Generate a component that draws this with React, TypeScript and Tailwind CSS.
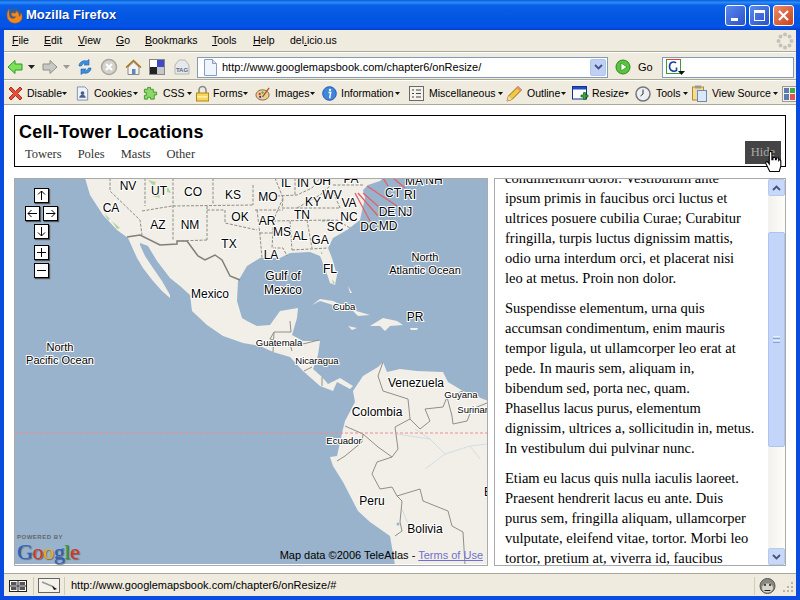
const menus = [
  { pre: '', u: 'F', post: 'ile', w: 'w-[32px]' },
  { pre: '', u: 'E', post: 'dit', w: 'w-[34px]' },
  { pre: '', u: 'V', post: 'iew', w: 'w-[38px]' },
  { pre: '', u: 'G', post: 'o', w: 'w-[29px]' },
  { pre: '', u: 'B', post: 'ookmarks', w: 'w-[67px]' },
  { pre: '', u: 'T', post: 'ools', w: 'w-[41px]' },
  { pre: '', u: 'H', post: 'elp', w: 'w-[37px]' },
  { pre: 'del', u: '.', post: 'icio.us', w: 'w-[60px]' },
];

const IconX = () => (
  <svg width="17" height="17" viewBox="0 0 17 17">
    <path d="M2 4l2-2 4.500 4.500L13 2l2 2-4.500 4.500L15 13l-2 2-4.500-4.500L4 15l-2-2 4.500-4.500z" fill="#e8503a" stroke="#b02a18" />
  </svg>
);
const IconCookie = () => (
  <svg width="15" height="17" viewBox="0 0 16 17">
    <path d="M2.500 1.500h8l3 3v11h-11z" fill="#eef2fa" stroke="#7d8fb0" />
    <circle cx="8" cy="8" r="2" fill="#4a5f85" />
    <path d="M4.500 13c0-2.500 2-3 3.500-3s3.500.5 3.500 3z" fill="#4a5f85" />
  </svg>
);
const IconCss = () => (
  <svg width="15" height="15" viewBox="0 0 16 16">
    <path d="M5 1.500h3v2h3v3h3.500v3H12v4.500H8v-2H5v2H1.500v-4h2v-3h-2v-3.500H5z" fill="#8fd66a" stroke="#3d9a2c" />
  </svg>
);
const IconLock = () => (
  <svg width="15" height="17" viewBox="0 0 15 17">
    <path d="M4 8V5a3.500 3.500 0 0 1 7 0v3" fill="none" stroke="#888" strokeWidth="1.500" />
    <rect x="1.500" y="8" width="12" height="8" fill="#f7d65a" stroke="#b08a1a" />
    <rect x="2.500" y="11" width="10" height="1.500" fill="#fff3b0" />
  </svg>
);
const IconPalette = () => (
  <svg width="16" height="16" viewBox="0 0 17 16">
    <ellipse cx="8" cy="9" rx="7" ry="5.500" fill="#e8cf9a" stroke="#8a6a30" />
    <circle cx="5" cy="8" r="1.200" fill="#d33" />
    <circle cx="8" cy="6.500" r="1.200" fill="#3a3" />
    <circle cx="5.500" cy="11" r="1.200" fill="#33c" />
    <path d="M8 11L15 1.500" stroke="#b0562a" strokeWidth="1.500" />
  </svg>
);
const IconInfo = () => (
  <svg width="15" height="15" viewBox="0 0 15 15">
    <circle cx="7.500" cy="7.500" r="6.800" fill="#3f86dd" stroke="#1f5bb0" />
    <circle cx="8" cy="4" r="1.200" fill="#fff" />
    <path d="M6.500 6.500h2.200l-1 5h1" fill="none" stroke="#fff" strokeWidth="1.400" />
  </svg>
);
const IconMisc = () => (
  <svg width="15" height="15" viewBox="0 0 15 15">
    <rect x="0.500" y="0.500" width="14" height="14" fill="#f4f2ea" stroke="#6a6a6a" />
    <path d="M3 4h2M7 4h5M3 7.500h2M7 7.500h5M3 11h2M7 11h5" stroke="#444" />
  </svg>
);
const IconPencil = () => (
  <svg width="17" height="17" viewBox="0 0 17 17">
    <path d="M1 16l1.500-5L12 1.500 15.500 5 6 14.500z" fill="#f5c842" stroke="#8a6a10" />
    <path d="M1 16l1.500-5L6 14.500z" fill="#f0dcb0" />
    <path d="M12 1.500L15.500 5l-1.500 1.500L10.500 3z" fill="#e88" />
  </svg>
);
const IconResize = () => (
  <svg width="17" height="15" viewBox="0 0 17 15">
    <rect x="0.500" y="0.500" width="14" height="12.500" fill="#fff" stroke="#10309a" />
    <rect x="1" y="1" width="13" height="2.500" fill="#2050c0" />
    <path d="M11.500 6.500h2v2.500H16v2h-2.500v2.500h-2V11H9V9h2.500z" fill="#39a935" stroke="#14601a" strokeWidth="0.700" />
  </svg>
);
const IconClock = () => (
  <svg width="16" height="16" viewBox="0 0 16 16">
    <circle cx="8" cy="8" r="7" fill="#eceff4" stroke="#777" strokeWidth="1.500" />
    <path d="M8 3.500V8l-2.500 2" fill="none" stroke="#333" />
  </svg>
);
const IconClipboard = () => (
  <svg width="15" height="17" viewBox="0 0 15 17">
    <rect x="0.500" y="2" width="11" height="13" fill="#f2dc9a" stroke="#b58a20" />
    <rect x="3" y="0.500" width="6" height="3" fill="#999" />
    <rect x="5.500" y="5.500" width="9" height="11" fill="#dce7f8" stroke="#6a88b8" />
  </svg>
);

const devItems = [
  { label: 'Disable', icon: <IconX />, w: 'w-[68px]', gap: 'gap-[3px]' },
  { label: 'Cookies', icon: <IconCookie />, w: 'w-[68px]', gap: 'gap-[4px]' },
  { label: 'CSS', icon: <IconCss />, w: 'w-[52px]', gap: 'gap-[5px]' },
  { label: 'Forms', icon: <IconLock />, w: 'w-[60px]', gap: 'gap-[3px]' },
  { label: 'Images', icon: <IconPalette />, w: 'w-[67px]', gap: 'gap-[4px]' },
  { label: 'Information', icon: <IconInfo />, w: 'w-[87px]', gap: 'gap-[4px]' },
  { label: 'Miscellaneous', icon: <IconMisc />, w: 'w-[97px]', gap: 'gap-[5px]' },
  { label: 'Outline', icon: <IconPencil />, w: 'w-[66px]', gap: 'gap-[4px]' },
  { label: 'Resize', icon: <IconResize />, w: 'w-[63px]', gap: 'gap-[3px]' },
  { label: 'Tools', icon: <IconClock />, w: 'w-[57px]', gap: 'gap-[5px]' },
  { label: 'View Source', icon: <IconClipboard />, w: 'w-[90px]', gap: 'gap-[5px]' },
];

const bigLabels: [string, number, number][] = [
  ['NV', 128, 191], ['UT', 159, 196], ['CO', 193, 197], ['KS', 233, 200], ['MO', 268, 202],
  ['CA', 111, 213], ['OK', 240, 222], ['AZ', 158, 230], ['NM', 190, 230], ['AR', 267, 226],
  ['TX', 229, 249], ['IL', 286, 188], ['IN', 303, 188], ['OH', 322, 186], ['PA', 351, 184],
  ['MA', 414, 186], ['NH', 434, 185], ['CT', 393, 198], ['RI', 410, 200], ['WV', 332, 200],
  ['KY', 313, 207], ['VA', 349, 208], ['TN', 302, 220], ['NC', 349, 222], ['DE', 387, 217],
  ['NJ', 405, 217], ['DC', 369, 232], ['MD', 388, 231], ['SC', 335, 232], ['MS', 282, 237],
  ['AL', 300, 241], ['GA', 320, 245], ['LA', 271, 260], ['FL', 330, 274], ['Gulf of', 283, 281],
  ['Mexico', 283, 295], ['Mexico', 210, 299], ['PR', 415, 322], ['Venezuela', 416, 388],
  ['Colombia', 377, 417], ['Peru', 372, 506], ['Bolivia', 425, 534], ['B', 488, 497],
];

const oceanLabels: [string, number, number][] = [
  ['North', 425, 262], ['Atlantic Ocean', 425, 275], ['North', 60, 352], ['Pacific Ocean', 60, 365],
];

const smallLabels: [string, number, number][] = [
  ['Cuba', 344, 311], ['Guatemala', 279, 347], ['Nicaragua', 317, 365], ['Guyana', 461, 399],
  ['Surinam', 475, 414], ['Ecuador', 344, 445],
];

const MapDrawing = () => (
  <svg width="472" height="385" viewBox="15 180 472 385" className="block">
    <rect x="15" y="180" width="472" height="385" fill="#99b3cc" />
    {/* north + central america */}
    <path
      d="M85 179L90 196L103 216L117 231L128 239L137 259L143 269L153 282L162 292L170 299L170 296L162 282L153 269L145 257L140 246L140 244L148 247L157 262L170 279L180 287L190 296L192 312L207 326L223 337L243 344L260 347L273 353L290 358L303 372L320 387L333 392L337 383L350 390L353 387L340 379L328 385L322 378L313 370L318 356L320 342L303 342L292 336L297 319L298 309L280 312L270 326L257 327L247 322L242 319L237 302L238 282L240 279L247 267L260 259L280 259L290 254L310 253L320 257L325 269L330 284L335 286L337 276L332 259L328 249L333 239L347 231L360 221L362 212L365 199L363 191L368 186L380 182L383 179Z"
      fill="#f1efe8"
    />
    {/* south america */}
    <path
      d="M353 392L363 377L378 368L383 363L387 373L400 370L417 372L443 373L448 383L463 392L488 402V566H395L390 537L370 523L358 512L343 483L333 467L330 458L337 457L343 430L345 422L355 403Z"
      fill="#f1efe8"
    />
    {/* islands */}
    <path d="M312 306L320 300L333 302L353 311L370 316L358 317L352 311L333 306L320 302Z" fill="#f1efe8" />
    <path d="M370 327L383 319L397 322L403 326L390 327L385 332L380 327Z" fill="#f1efe8" />
    <path d="M348 327L357 329L352 331Z" fill="#f1efe8" />
    <path d="M410 329L418 329L417 331L411 331Z" fill="#f1efe8" />
    <path d="M348 287L352 294L350 294Z" fill="#f1efe8" />
    {/* vegetation */}
    <g fill="#b5d39c">
      <path d="M104 214l6 6-2 1zM112 222l8 7-3 1zM148 181l8 2-2 4zM152 197l7-2 1 4zM167 186l4 8-4-1zM332 280l3 4-2 1zM321 252l2 3-2 0z" />
    </g>
    {/* rivers */}
    <g fill="none" stroke="#d3dde4">
      <path d="M397 435L430 440L445 455L470 447L487 445M430 440L415 430M445 455L425 470M470 447L480 460M402 510L410 530" />
    </g>
    <circle cx="398" cy="525" r="1.500" fill="#99b3cc" />
    {/* country borders */}
    <g fill="none" stroke="#8f8f88">
      <path d="M127 238L140 236L160 246L177 245L177 242L187 242L198 257L205 261L215 256L222 261L230 277L240 281" stroke="#807f78" strokeWidth="1.500" />
      <path d="M273 353L274 333H291L290 322M274 333L270 340L290 345L292 352M290 345L303 345L319 341M304 372L312 368M322 378L322 387" />
      <path d="M383 363L378 377L383 392L408 400L410 420L395 428L398 450L392 458L378 448L363 435L345 427" />
      <path d="M410 420L420 430L430 422L425 410L443 408L447 398L463 392M447 398L452 417L453 425L467 422L472 410L487 404" />
      <path d="M363 435L362 443L345 457L337 462" />
      <path d="M392 458L377 463L372 475L380 490L392 488L397 497L420 490L423 502L448 512L452 527L463 533L465 566" />
      <path d="M397 497L402 502L400 523L402 532L395 537" />
    </g>
    {/* state borders */}
    <g fill="none" stroke="#8d8d86" strokeDasharray="3 1.500">
      <path d="M110 179V192L140 221L142 236M142 212L172 207M145 179V207M173 179V242M213 179V206M173 207L253 206M253 186V206M207 207V241M177 242L207 241M207 211H225V224L257 231M255 211H283M257 211L260 236L262 259M260 234H273" />
      <path d="M275 179L283 199L282 209H340M273 222L330 221M290 222L292 251M307 221L312 249M292 251L328 249M273 232L272 249H283L287 257M295 179V196M277 197L297 196L312 189L320 179M297 209L320 196L330 187M322 222L337 221L350 229M333 186H363M340 209L332 190M283 199L273 222L273 232" />
    </g>
    {/* tower leader lines */}
    <g stroke="#e2606a" strokeWidth="1.300">
      <path d="M355 194L370 222M358 194L378 217M363 194L380 209M367 187L397 207M383 179L388 187M393 179L405 189" />
    </g>
    <path d="M15 434H487" stroke="#ee8c90" strokeDasharray="3 2" />
    {bigLabels.map(([t, x, y], i) => (
      <text key={i} x={x} y={y} textAnchor="middle" className="text-[12px] fill-black stroke-white stroke-[2px] [paint-order:stroke] font-['Liberation_Sans',sans-serif]">
        {t}
      </text>
    ))}
    {oceanLabels.map(([t, x, y], i) => (
      <text key={i} x={x} y={y} textAnchor="middle" className="text-[11px] fill-black stroke-white stroke-[2px] [paint-order:stroke] font-['Liberation_Sans',sans-serif]">
        {t}
      </text>
    ))}
    {smallLabels.map(([t, x, y], i) => (
      <text key={i} x={x} y={y} textAnchor="middle" className="text-[9.500px] fill-black stroke-white stroke-[2px] [paint-order:stroke] font-['Liberation_Sans',sans-serif]">
        {t}
      </text>
    ))}
  </svg>
);

const ZoomButton = ({ d }: { d: string }) => (
  <div className="w-[15px] h-[15px] bg-white border border-black shadow-[1px_1px_1px_#555]">
    <svg width="13" height="13" viewBox="0 0 13 13">
      <path d={d} fill="none" stroke="#000" />
    </svg>
  </div>
);

const Paragraph = ({ lines }: { lines: string[] }) => (
  <p className="mb-[10px]">
    {lines.map((l, i) => (
      <span key={i} className="block whitespace-nowrap">{l}</span>
    ))}
  </p>
);

export default function App() {
  return (
    <div className="w-[800px] h-[600px] overflow-hidden flex flex-col bg-[#0a4be0] font-['Liberation_Sans',sans-serif] text-black">
      {/* Title bar */}
      <div className="h-[30px] shrink-0 flex items-center pl-[6px] pr-[6px] bg-[linear-gradient(to_bottom,#0a5bdc_0%,#2a8cf5_8%,#0a5fe8_18%,#0256e0_60%,#0453ea_90%,#0340c8_100%)]">
        <svg width="17" height="17" viewBox="0 0 17 17">
          <circle cx="8.500" cy="8.500" r="7.500" fill="#2b5f9e" />
          <path d="M3 2C1 5 0 10 3 13.500C6 17 12 17 15 13.500C16.500 11.500 16.500 8 15 6C15 8 14 9 13 9.500C13.500 7 12 4.500 10 4C10.500 6 9 6.500 7.500 6C6 5.500 5 6.500 5.500 8C6 9.500 8 10 10 9.500C9 12 5 12.500 3.500 9.500C3 7 3 4 3 2Z" fill="#ef8a1c" stroke="#c8561a" strokeWidth="0.500" />
        </svg>
        <span className="ml-[3px] text-[13px] font-bold text-white [text-shadow:1px_1px_0_#0b2f9c]">Mozilla Firefox</span>
        <div className="ml-auto flex gap-[3px]">
          <div className="w-[21px] h-[21px] rounded-[3px] border border-white bg-[linear-gradient(135deg,#5a88ef,#2a52c8)] flex items-end pl-[5px] pb-[4px]">
            <div className="w-[7px] h-[3px] bg-white" />
          </div>
          <div className="w-[21px] h-[21px] rounded-[3px] border border-white bg-[linear-gradient(135deg,#5a88ef,#2a52c8)] p-[4px]">
            <div className="w-full h-full border border-white border-t-[3px]" />
          </div>
          <div className="w-[21px] h-[21px] rounded-[3px] border border-white bg-[linear-gradient(135deg,#ec8a6a,#c8421c)]">
            <svg width="19" height="19" viewBox="0 0 19 19">
              <path d="M5 5l9 9M14 5l-9 9" stroke="#fff" strokeWidth="2.200" />
            </svg>
          </div>
        </div>
      </div>

      {/* Window client */}
      <div className="flex-1 min-h-0 mx-[4px] mb-[4px] flex flex-col bg-[#ece9d8]">
        {/* Menu bar */}
        <div className="h-[22px] shrink-0 flex items-center pl-[8px] pt-[1px] bg-[#efebde] text-[10.500px] border-b border-[#aca899]">
          {menus.map(m => (
            <span key={m.u} className={m.w}>
              {m.pre}<span className="underline">{m.u}</span>{m.post}
            </span>
          ))}
          <svg className="ml-auto mr-[2px]" width="18" height="18" viewBox="0 0 18 18" fill="#c4c2bb">
            <circle cx="9" cy="2.500" r="2" /><circle cx="13.500" cy="4.500" r="2" /><circle cx="15.500" cy="9" r="2" /><circle cx="13.500" cy="13.500" r="2" />
            <circle cx="9" cy="15.500" r="2" /><circle cx="4.500" cy="13.500" r="2" /><circle cx="2.500" cy="9" r="2" /><circle cx="4.500" cy="4.500" r="2" />
          </svg>
        </div>

        {/* Navigation toolbar */}
        <div className="h-[28px] shrink-0 flex items-center pl-[3px] pt-[2px] bg-[#efebde] border-t border-white border-b border-b-[#aca899]">
          <svg width="16" height="16" viewBox="0 0 16 16">
            <path d="M8 1.500L1 8l7 6.500V11h7V5H8z" fill="#7fe05a" stroke="#2e9a2a" />
          </svg>
          <svg className="ml-[5px]" width="7" height="4" viewBox="0 0 7 4"><path d="M0 0h7L3.500 4z" fill="#222" /></svg>
          <svg className="ml-[7px]" width="16" height="16" viewBox="0 0 16 16">
            <path d="M8 1.500L15 8l-7 6.500V11H1V5h7z" fill="#c8c8c4" stroke="#8f8f8a" />
          </svg>
          <svg className="ml-[5px]" width="7" height="4" viewBox="0 0 7 4"><path d="M0 0h7L3.500 4z" fill="#999" /></svg>
          <svg className="ml-[7px]" width="16" height="16" viewBox="0 0 16 16">
            <path d="M2 7C2 3 6 1 10 2L12 0.500V6H7L9 4.500C7 4 5 5 4.500 7zM14 9C14 13 10 15 6 14L4 15.500V10H9L7 11.500C9 12 11 11 11.500 9z" fill="#3a8fe8" stroke="#175ca8" strokeWidth="0.600" />
          </svg>
          <svg className="ml-[7px]" width="18" height="18" viewBox="0 0 18 18">
            <circle cx="9" cy="9" r="7.500" fill="#d4d2cc" stroke="#a8a6a0" strokeWidth="1.500" />
            <path d="M6 6l6 6M12 6l-6 6" stroke="#fff" strokeWidth="2" />
          </svg>
          <svg className="ml-[7px]" width="17" height="17" viewBox="0 0 17 17">
            <path d="M1 8.500L8.500 1.500 16 8.500" fill="#e8b040" stroke="#a87a20" strokeWidth="1.500" />
            <path d="M3 8l5.500-5L14 8v7.500H3z" fill="#f4f2ea" stroke="#8a8a84" />
            <rect x="7" y="10" width="3.500" height="5.500" fill="#5b87c8" />
          </svg>
          <svg className="ml-[7px]" width="16" height="16" viewBox="0 0 16 16">
            <rect x="0.500" y="0.500" width="15" height="15" fill="#fff" stroke="#888" />
            <rect x="8" y="1" width="7" height="7" fill="#3e49c4" /><rect x="1" y="8" width="7" height="7" fill="#222" /><rect x="8" y="8" width="7" height="7" fill="#c4c6c8" />
          </svg>
          <svg className="ml-[9px]" width="16" height="16" viewBox="0 0 16 16">
            <path d="M5 1h6l4 5v9H1V6z" fill="#e6e8ea" stroke="#b4b6b8" />
            <text x="8" y="13" textAnchor="middle" className="text-[6px] font-bold fill-[#5a6a80]">TAG</text>
          </svg>
          <div className="ml-[7px] w-[411px] h-[21px] flex items-center bg-white border border-[#7f9db9] pl-[5px] pr-[1px]">
            <svg width="15" height="17" viewBox="0 0 15 17">
              <path d="M1.500 0.500h8l4 4v12h-12z" fill="#f0f4fc" stroke="#8a9cc0" />
              <path d="M9.500 0.500v4h4" fill="#d4def0" stroke="#8a9cc0" />
            </svg>
            <span className="ml-[4px] text-[11px] whitespace-nowrap">http://www.googlemapsbook.com/chapter6/onResize/</span>
            <div className="ml-auto w-[16px] h-[17px] bg-[#c0d0f4] rounded-[2px] border border-[#b0c4ec] flex items-center justify-center">
              <svg width="9" height="6" viewBox="0 0 9 6"><path d="M1 1l3.500 3.500L8 1" fill="none" stroke="#3f5480" strokeWidth="1.800" /></svg>
            </div>
          </div>
          <svg className="ml-[7px]" width="16" height="16" viewBox="0 0 16 16">
            <circle cx="8" cy="8" r="7" fill="#5cc43c" stroke="#2a8a20" />
            <path d="M6 4l6 4-6 4z" fill="#fff" stroke="#2a8a20" strokeWidth="0.700" />
          </svg>
          <span className="ml-[7px] text-[11px]">Go</span>
          <div className="ml-[9px] w-[132px] h-[21px] flex items-center bg-white border border-[#7f9db9] pl-[3px]">
            <svg width="20" height="18" viewBox="0 0 20 18">
              <rect x="0.500" y="1.500" width="14" height="14" fill="#fff" stroke="#3a9a3a" />
              <path d="M0.500 1.500h14" stroke="#d43" />
              <path d="M10 5C8 3 3.500 4 3.500 8.500S8 14 10.500 12.500V9.500" fill="none" stroke="#1a3ea8" strokeWidth="1.600" />
              <path d="M12 13h7l-3.500 4z" fill="#111" />
            </svg>
          </div>
        </div>

        {/* Web developer toolbar */}
        <div className="h-[25px] shrink-0 flex items-center pl-[3px] pt-[2px] bg-[#efebde] border-t border-white border-b border-b-[#aca899] overflow-hidden text-[10.500px]">
          {devItems.map(item => (
            <div key={item.label} className={`${item.w} ${item.gap} shrink-0 flex items-center [&>svg]:shrink-0`}>
              {item.icon}
              <span className="whitespace-nowrap">{item.label}</span>
              <svg className="-ml-[3px]" width="5" height="3" viewBox="0 0 5 3"><path d="M0 0h5L2.500 3z" fill="#111" /></svg>
            </div>
          ))}
          <div className="shrink-0 w-[15px] h-[16px] border border-[#999] bg-[#f4f2ea] grid grid-cols-2 gap-[1px] p-[1px]">
            <div className="bg-[#5a7ab0]" /><div className="bg-[#4a4]" /><div className="bg-[#5a7ab0]" /><div className="bg-[#d55]" />
          </div>
        </div>

        {/* Page */}
        <div className="flex-1 min-h-0 bg-white px-[10px] pt-[10px] pb-[7px] flex flex-col gap-[11px]">
          <div className="relative h-[52px] shrink-0 border border-black px-[4px]">
            <h1 className="text-[18px] leading-[20px] mt-[6px] font-bold font-['Liberation_Sans',sans-serif] tracking-[0.2px]">Cell-Tower Locations</h1>
            <div className="flex gap-[16px] pl-[6px] mt-[5px] font-['Liberation_Serif',serif] text-[12.500px] leading-[14px] text-[#333]">
              <span>Towers</span>
              <span>Poles</span>
              <span>Masts</span>
              <span>Other</span>
            </div>
            <div className="absolute right-[4px] bottom-[2px] w-[36px] h-[23px] bg-[#444] text-[#aaa] font-['Liberation_Serif',serif] text-[12.500px] flex items-center justify-center">Hide</div>
            <svg className="absolute left-[750px] top-[33px]" width="17" height="28" viewBox="0 0 16 24">
              <path d="M4 2a1.300 1.300 0 0 1 2.500 0v7l1 0v-1.500a1.200 1.200 0 0 1 2.300 0V9l.8 0v-1a1.200 1.200 0 0 1 2.300 0v1.500a1.100 1.100 0 0 1 2 .5v5l-1.500 5H4.500l-3.500-7c-1-2 1-3 2-1.500L4 13z" fill="#fff" stroke="#000" />
            </svg>
          </div>
          <div className="flex-1 min-h-0 flex gap-[6px]">
            {/* Map */}
            <div className="relative w-[474px] shrink-0 border border-[#aaa] overflow-hidden">
              <MapDrawing />
              <div className="absolute left-[10px] top-[9px] w-[33px] flex flex-col items-center">
                <ZoomButton d="M6.500 11V2M3 5.500l3.500-3.500 3.500 3.500" />
                <div className="flex gap-[3px] mt-[3px]">
                  <ZoomButton d="M11 6.500H2M5.500 3L2 6.500 5.500 10" />
                  <ZoomButton d="M2 6.500h9M7.500 3L11 6.500 7.500 10" />
                </div>
                <div className="mt-[3px]"><ZoomButton d="M6.500 2v9M3 7.500L6.500 11 10 7.500" /></div>
                <div className="mt-[6px]"><ZoomButton d="M6.500 2v9M2 6.500h9" /></div>
                <div className="mt-[3px]"><ZoomButton d="M2 6.500h9" /></div>
              </div>
              <div className="absolute left-[2px] bottom-[2px]">
                <div className="text-[6px] leading-[7px] font-bold text-[#666] tracking-[0.5px]">POWERED BY</div>
                <div className="font-['Liberation_Serif',serif] text-[22px] leading-[22px] -tracking-[0.4px] [text-shadow:1px_1px_1px_#666]">
                  <span className="text-[#2a5fc4]">G</span><span className="text-[#d8331f]">o</span><span className="text-[#e8b010]">o</span><span className="text-[#2a5fc4]">g</span><span className="text-[#2f9a3a]">l</span><span className="text-[#d8331f]">e</span>
                </div>
              </div>
              <div className="absolute right-[4px] bottom-[3px] text-[11px] leading-[13px] whitespace-nowrap">
                Map data ©2006 TeleAtlas - <span className="underline text-[#7070d0]">Terms of Use</span>
              </div>
            </div>
            {/* Text column */}
            <div className="relative flex-1 min-w-0 border border-[#aaa] overflow-hidden flex">
              <div className="flex-1 min-w-0 pl-[10px] -mt-[11px] font-['Liberation_Serif',serif] text-[14.500px] leading-[20px] text-black overflow-hidden">
                <Paragraph lines={[
                  'condimentum dolor. Vestibulum ante',
                  'ipsum primis in faucibus orci luctus et',
                  'ultrices posuere cubilia Curae; Curabitur',
                  'fringilla, turpis luctus dignissim mattis,',
                  'odio urna interdum orci, et placerat nisi',
                  'leo at metus. Proin non dolor.',
                ]} />
                <Paragraph lines={[
                  'Suspendisse elementum, urna quis',
                  'accumsan condimentum, enim mauris',
                  'tempor ligula, ut ullamcorper leo erat at',
                  'pede. In mauris sem, aliquam in,',
                  'bibendum sed, porta nec, quam.',
                  'Phasellus lacus purus, elementum',
                  'dignissim, ultrices a, sollicitudin in, metus.',
                  'In vestibulum dui pulvinar nunc.',
                ]} />
                <Paragraph lines={[
                  'Etiam eu lacus quis nulla iaculis laoreet.',
                  'Praesent hendrerit lacus eu ante. Duis',
                  'purus sem, fringilla aliquam, ullamcorper',
                  'vulputate, eleifend vitae, tortor. Morbi leo',
                  'tortor, pretium at, viverra id, faucibus',
                ]} />
              </div>
              {/* Scrollbar */}
              <div className="w-[17px] shrink-0 flex flex-col bg-[linear-gradient(to_right,#f3f1ec,#fdfdfa)]">
                <div className="h-[17px] shrink-0 rounded-[2px] bg-[#c8d8f8] border border-[#b4c8f0] flex items-center justify-center">
                  <svg width="9" height="6" viewBox="0 0 9 6"><path d="M1 5l3.500-3.500L8 5" fill="none" stroke="#3f5480" strokeWidth="1.800" /></svg>
                </div>
                <div className="mt-[36px] h-[215px] shrink-0 rounded-[2px] bg-[#c4d5fa] border border-[#aec4f0] flex flex-col items-center justify-center gap-[1px]">
                  <div className="w-[7px] h-px bg-[#e8eefc]" /><div className="w-[7px] h-px bg-[#8aa4dc]" /><div className="w-[7px] h-px bg-[#e8eefc]" /><div className="w-[7px] h-px bg-[#8aa4dc]" />
                </div>
                <div className="mt-auto h-[17px] shrink-0 rounded-[2px] bg-[#c8d8f8] border border-[#b4c8f0] flex items-center justify-center">
                  <svg width="9" height="6" viewBox="0 0 9 6"><path d="M1 1l3.500 3.500L8 1" fill="none" stroke="#3f5480" strokeWidth="1.800" /></svg>
                </div>
              </div>
            </div>
          </div>
        </div>

        {/* Status bar */}
        <div className="h-[23px] shrink-0 flex items-center pt-[1px] bg-[#efebde] border-t border-[#aca899] text-[11px]">
          <svg className="ml-[5px]" width="18" height="12" viewBox="0 0 18 12">
            <rect x="0.500" y="0.500" width="17" height="11" fill="#fff" stroke="#222" />
            <path d="M9 0v12M0 6h18" stroke="#222" />
            <rect x="2" y="2" width="5.500" height="3" fill="#555" /><rect x="10.500" y="2" width="5.500" height="3" fill="#555" /><rect x="2" y="7" width="5.500" height="3" fill="#555" /><rect x="10.500" y="7" width="5.500" height="3" fill="#555" />
          </svg>
          <div className="ml-[6px] w-px h-[18px] bg-[#cfccba]" />
          <svg className="ml-[4px]" width="22" height="15" viewBox="0 0 22 15">
            <rect x="0.500" y="0.500" width="21" height="14" fill="#f4f2ea" stroke="#666" />
            <path d="M4 4l12 5" stroke="#999" strokeWidth="1.500" /><path d="M14 8l5 3-3 1z" fill="#111" />
          </svg>
          <div className="ml-[4px] w-px h-[18px] bg-[#cfccba]" />
          <span className="ml-[6px] whitespace-nowrap">http://www.googlemapsbook.com/chapter6/onResize/#</span>
          <div className="ml-auto w-px h-[18px] bg-[#cfccba]" />
          <svg className="ml-[4px]" width="17" height="16" viewBox="0 0 17 16">
            <circle cx="8.500" cy="8" r="7.500" fill="#8a8880" stroke="#55534e" />
            <ellipse cx="8.500" cy="10" rx="5.500" ry="4.500" fill="#d8d5ca" />
            <circle cx="6" cy="7" r="1" fill="#222" /><circle cx="11" cy="7" r="1" fill="#222" />
            <path d="M5.500 12.500h6" stroke="#222" />
          </svg>
          <svg className="ml-[5px] mr-[1px]" width="14" height="14" viewBox="0 0 14 14" fill="#b8b5a6">
            <rect x="10" y="3" width="2" height="2" /><rect x="6" y="7" width="2" height="2" /><rect x="10" y="7" width="2" height="2" /><rect x="2" y="11" width="2" height="2" /><rect x="6" y="11" width="2" height="2" /><rect x="10" y="11" width="2" height="2" />
          </svg>
        </div>
      </div>
    </div>
  );
}
